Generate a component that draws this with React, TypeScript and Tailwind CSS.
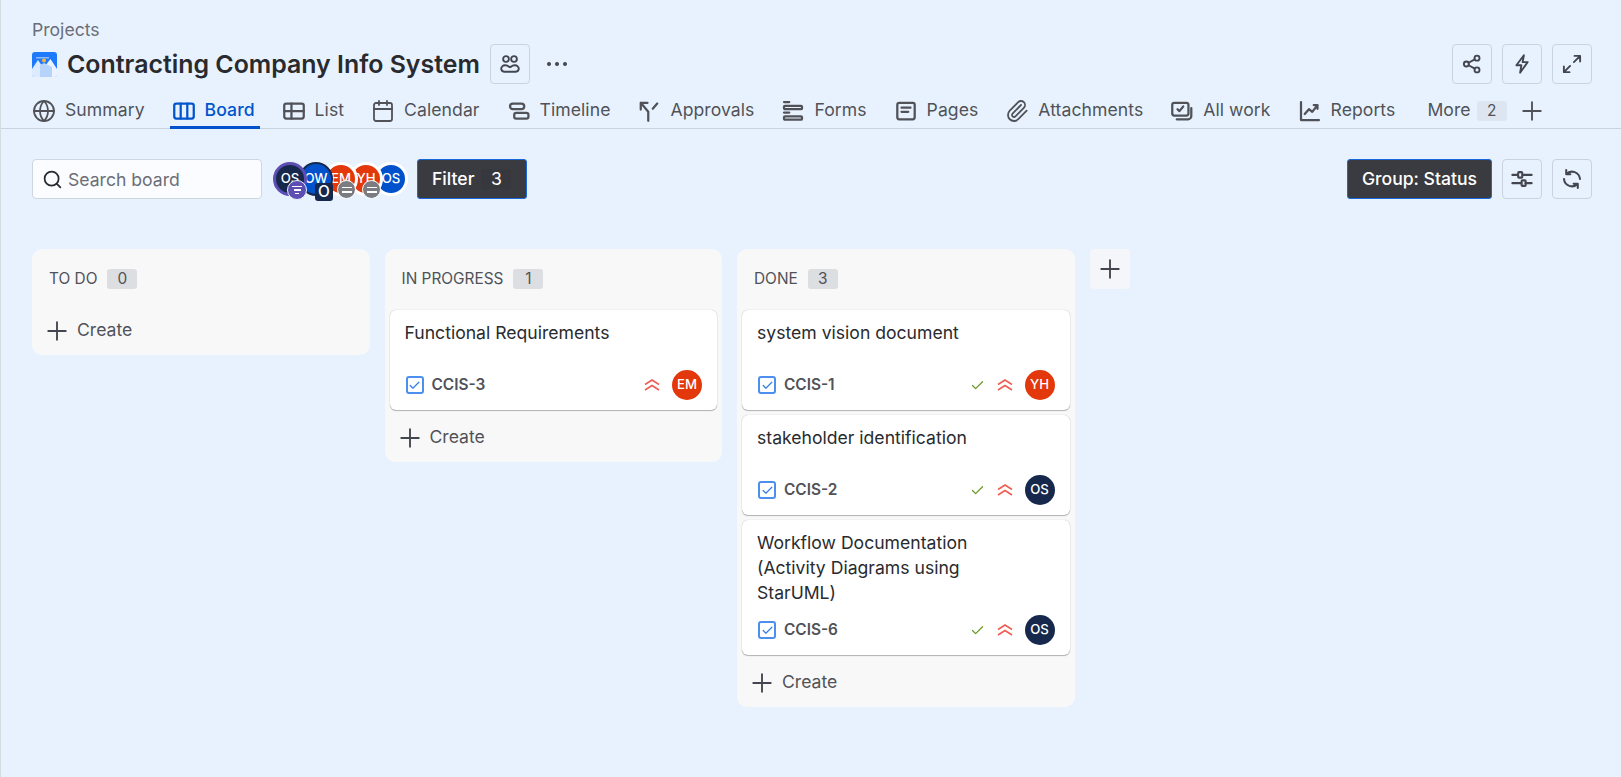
import { Globe, Calendar, Paperclip, Plus, Search, Check } from "lucide-react";
import type { ReactNode } from "react";

const font = { fontFamily: "Inter, sans-serif" };

const Ico = ({ children, size = 20 }: { children: ReactNode; size?: number }) => (
  <svg width={size} height={size} viewBox="0 0 16 16" fill="none" stroke="currentColor" strokeWidth="1.5" strokeLinecap="round" strokeLinejoin="round" className="shrink-0">
    {children}
  </svg>
);

const BoardIcon = () => (
  <Ico size={24}>
    <rect x="1.500" y="3" width="13" height="10" rx="1.300" />
    <path d="M5.800 3v10M10.200 3v10" />
  </Ico>
);
const ListIcon = () => (
  <Ico size={24}>
    <rect x="1.500" y="3" width="13" height="10" rx="1.300" />
    <path d="M1.500 8h13M6.300 3v10" />
  </Ico>
);
const TimelineIcon = () => (
  <Ico size={24}>
    <rect x="2" y="3" width="9.500" height="3.800" rx="1.900" />
    <rect x="4.800" y="9.200" width="9.500" height="3.800" rx="1.400" />
  </Ico>
);
const ApprovalsIcon = () => (
  <Ico size={24}>
    <path d="M2.500 2.500h4.500M2.500 2.500V7M2.500 2.500l5 6V14.500M10.500 6.500 13.500 3" />
  </Ico>
);
const FormsIcon = () => (
  <Ico size={24}>
    <path d="M2 2h3.500M2 9h3.500" />
    <rect x="2" y="4.500" width="12" height="2.300" rx="0.700" />
    <rect x="2" y="11.500" width="12" height="2.300" rx="0.700" />
  </Ico>
);
const PagesIcon = () => (
  <Ico size={24}>
    <rect x="2.200" y="2.500" width="11.600" height="11" rx="1.300" />
    <path d="M5 5.800h6M5 8.500h4.500" />
  </Ico>
);
const AllWorkIcon = () => (
  <Ico size={24}>
    <rect x="1.500" y="2.500" width="10.800" height="8.500" rx="1.300" />
    <path d="M5 6.800l1.300 1.300L8.800 5M4.500 13.500h7.500a2.200 2.200 0 0 0 2.200-2.200V6" />
  </Ico>
);
const ReportsIcon = () => (
  <Ico size={24}>
    <path d="M2 2v12h12M4.500 10l2.800-3.200 2.200 1.800 3.500-4.500M10.500 4h2.500v2.500" />
  </Ico>
);
const PeopleIcon = () => (
  <Ico>
    <circle cx="4.800" cy="4" r="2.300" />
    <circle cx="11.200" cy="4" r="2.300" />
    <path d="M3.500 14.200a2.500 2.500 0 0 1-1.500-4.500c1-1 3.500-1 5 .3 .5.500 1.500.500 2 0 1.500-1.300 4-1.300 5-.3a2.500 2.500 0 0 1-1.500 4.500z" />
  </Ico>
);
const ShareIcon = () => (
  <Ico>
    <circle cx="3.500" cy="8" r="2" />
    <circle cx="12" cy="3.300" r="2" />
    <circle cx="12" cy="12.700" r="2" />
    <path d="M5.300 7l4.900-2.700M5.300 9l4.900 2.700" />
  </Ico>
);
const BoltIcon = () => (
  <Ico>
    <path d="M9.500 1 3.500 9h4l-1 6 6-8.500h-4z" />
  </Ico>
);
const ExpandIcon = () => (
  <Ico>
    <path d="M9.500 6.500 14.500 1.500M10 1.500h4.500V6M6.500 9.500l-5 5M1.500 10v4.500H6" />
  </Ico>
);
const SlidersIcon = () => (
  <Ico size={22}>
    <path d="M1 5h4M8.500 5H15M1 11h6.500M10.500 11H15" />
    <rect x="5.200" y="3" width="3" height="4" rx="0.600" />
    <rect x="7.700" y="9" width="3" height="4" rx="0.600" />
  </Ico>
);
const RefreshIcon = () => (
  <Ico size={22}>
    <path d="M3.800 1.500v3h3M3.800 4.500A5.800 5.800 0 0 1 13.800 8M12.200 14.500v-3h-3M12.200 11.500A5.800 5.800 0 0 1 2.200 8" />
  </Ico>
);

const ProjectLogo = () => (
  <svg width="25" height="25" viewBox="0 0 25 25" className="shrink-0">
    <rect width="25" height="25" rx="3" fill="#1d7afc" />
    <rect x="4" y="5" width="13" height="1.500" fill="#8db9f7" />
    <path d="M0 17 6 8l6 9v8H2a2 2 0 0 1-2-2z" fill="#dcebff" />
    <path d="M13 25V14l5.500-7 6.500 10v6a2 2 0 0 1-2 2z" fill="#eaf3ff" />
    <path d="M8 25V13l4-2 8 4v10z" fill="#b6d4fb" />
    <circle cx="12" cy="8.500" r="2" fill="#f5b73b" />
  </svg>
);

const Chevrons = () => (
  <svg width="16" height="16" viewBox="0 0 16 16" fill="none" stroke="#f15b50" strokeWidth="1.500" className="shrink-0">
    <path d="M1 7.500 8 3l7 4.500M1 13 8 8.500l7 4.500" />
  </svg>
);

const TaskIcon = () => (
  <span className="ml-[1px] w-[18px] h-[18px] rounded-[3px] border-2 border-[#4c8fef] flex items-center justify-center shrink-0 bg-white">
    <Check size={13} strokeWidth={2.200} className="text-[#357de8]" />
  </span>
);

const tabs = [
  { label: "Summary", icon: <Globe size={24} strokeWidth={1.800} /> },
  { label: "Board", icon: <BoardIcon />, active: true },
  { label: "List", icon: <ListIcon /> },
  { label: "Calendar", icon: <Calendar size={24} strokeWidth={1.800} /> },
  { label: "Timeline", icon: <TimelineIcon /> },
  { label: "Approvals", icon: <ApprovalsIcon /> },
  { label: "Forms", icon: <FormsIcon /> },
  { label: "Pages", icon: <PagesIcon /> },
  { label: "Attachments", icon: <Paperclip size={24} strokeWidth={1.800} /> },
  { label: "All work", icon: <AllWorkIcon /> },
  { label: "Reports", icon: <ReportsIcon /> },
];

const IconBtn = ({ children }: { children: ReactNode }) => (
  <button className="w-10 h-10 rounded-[4px] border border-[#c9d3e0] flex items-center justify-center text-[#44464f]">{children}</button>
);

const Avatar = ({ text, bg }: { text: string; bg: string }) => (
  <span className={`w-[30px] h-[30px] rounded-full flex items-center justify-center text-white text-[13.2px] font-medium shrink-0 ${bg}`}>{text}</span>
);

const Card = ({ title, id, who, bg, done }: { title: ReactNode; id: string; who: string; bg: string; done?: boolean }) => (
  <div className="bg-white rounded-[6px] shadow-[0_1px_1px_rgba(30,31,33,0.3),0_0_1px_rgba(30,31,33,0.3)] py-[10px] px-[15px]">
    <div className="text-[17.6px] leading-[25px] text-[#292a2e] min-h-[40px] w-[250px]">{title}</div>
    <div className="flex items-center h-[30px] mt-[10px]">
      <TaskIcon />
      <span className="ml-[8px] text-[15.4px] font-semibold text-[#505258]">{id}</span>
      <span className="ml-auto flex items-center">
        {done && <Check size={15} strokeWidth={2} className="text-[#6a9a23] mr-[12px]" />}
        <Chevrons />
        <span className="ml-[12px]"><Avatar text={who} bg={bg} /></span>
      </span>
    </div>
  </div>
);

const CreateRow = ({ className }: { className: string }) => (
  <div className={`flex items-center text-[#505258] text-[17.6px] pl-[5px] h-[35px] ${className}`}>
    <Plus size={30} strokeWidth={1.500} className="text-[#44464f]" />
    <span className="ml-[5px]">Create</span>
  </div>
);

const ColHead = ({ name, n }: { name: string; n: number }) => (
  <div className="flex items-center h-[61px] pl-[12px] pb-[2px]">
    <span className="text-[15.4px] text-[#505258]">{name}</span>
    <span className="ml-[10px] w-[30px] h-5 rounded-[3px] bg-[#dddee1] text-[15.4px] text-[#505258] flex items-center justify-center">{n}</span>
  </div>
);

export default function App() {
  return (
    <div style={font} className="min-h-[777px] bg-[#e8f2ff] border-l border-[#d5dbe3] overflow-hidden">
      <div className="border-b border-[#c9d3e0] h-[129px] pl-[31px] pr-[29px] pt-[20px]">
        <div className="text-[17.6px] leading-5 text-[#6b6e76]">Projects</div>
        <div className="flex items-center h-10 mt-1">
          <ProjectLogo />
          <h1 className="ml-[10px] pt-[2px] text-[24.9px] font-semibold text-[#292a2e] whitespace-nowrap">Contracting Company Info System</h1>
          <span className="ml-[10px]"><IconBtn><PeopleIcon /></IconBtn></span>
          <div className="ml-[17px] flex gap-[4px]">
            <span className="w-[4px] h-[4px] rounded-full bg-[#44464f]" />
            <span className="w-[4px] h-[4px] rounded-full bg-[#44464f]" />
            <span className="w-[4px] h-[4px] rounded-full bg-[#44464f]" />
          </div>
          <div className="ml-auto flex gap-[10px]">
            <IconBtn><ShareIcon /></IconBtn>
            <IconBtn><BoltIcon /></IconBtn>
            <IconBtn><ExpandIcon /></IconBtn>
          </div>
        </div>
        <nav className="flex items-center gap-5 h-[41px] mt-[4px] -ml-[2px] text-[#505258] tracking-[0.06px]">
          {tabs.map((t) => (
            <div key={t.label} className={`relative h-full flex items-center gap-[9px] pl-[2px] pr-[5px] pt-[4px] text-[17.6px] ${t.active ? "text-[#0055cc] font-medium" : ""}`}>
              {t.icon}
              <span>{t.label}</span>
              {t.active && <span className="absolute left-0 right-0 bottom-0 h-[3px] bg-[#0052cc]" />}
            </div>
          ))}
          <div className="flex items-center h-full pt-[4px] text-[17.6px] ml-[7px]">
            <span>More</span>
            <span className="ml-[6px] w-[30px] h-5 bg-[#dde5f0] rounded-[3px] text-[15.4px] flex items-center justify-center">2</span>
            <Plus size={30} strokeWidth={1.500} className="ml-[10px]" />
          </div>
        </nav>
      </div>

      <div className="pl-[31px] pr-[29px] pt-[30px] flex items-center h-[70px]">
        <div className="w-[230px] h-10 bg-white/80 border border-[#d0d6df] rounded-[4px] flex items-center pl-[9px] text-[#6b6e76] text-[17.6px]">
          <Search size={21} strokeWidth={2} className="text-[#292a2e]" />
          <span className="ml-[5px] pt-[2px]">Search board</span>
        </div>
        <div className="ml-[11px] flex items-center">
          <span className="relative w-[34px] h-[34px] rounded-full bg-[#16294d] border-[3px] border-[#5e4db2] text-white text-[13.2px] font-medium flex items-center justify-center z-[5]">
            OS
            <span className="absolute right-[-3px] bottom-[-7px] w-[20px] h-[20px] rounded-full bg-[#5e4db2] border border-[#e8f2ff] flex flex-col gap-[2px] items-center justify-center">
              <span className="w-[10px] h-[1.5px] bg-white" /><span className="w-[7px] h-[1.5px] bg-white" /><span className="w-[4px] h-[1.5px] bg-white" />
            </span>
          </span>
          <span className="relative -ml-[8px] w-[34px] h-[34px] rounded-full bg-[#0052cc] border-2 border-[#16294d] text-white text-[13.2px] font-medium flex items-center justify-center z-[4]">
            OW
            <span className="absolute right-[-2px] bottom-[-7px] w-[18px] h-[18px] rounded-[3px] bg-[#16294d] text-white text-[15.4px] font-medium flex items-center justify-center">O</span>
          </span>
          {["EM", "YH"].map((t, i) => (
            <span key={t} className={`relative -ml-[9px] w-[34px] h-[34px] rounded-full bg-[#e2380b] border-[3px] border-white text-white text-[13.2px] font-medium flex items-center justify-center ${i === 0 ? "z-[3]" : "z-[2]"}`}>
              {t}
              <span className="absolute right-[-1px] bottom-[-6px] w-[19px] h-[19px] rounded-full bg-[#7a7c82] border border-white flex flex-col gap-[3px] items-center justify-center">
                <span className="w-[10px] h-[1.5px] bg-white" /><span className="w-[10px] h-[1.5px] bg-white" />
              </span>
            </span>
          ))}
          <span className="-ml-[9px] w-[34px] h-[34px] rounded-full bg-[#0052cc] border-[3px] border-white text-white text-[13.2px] font-medium flex items-center justify-center z-[1]">OS</span>
        </div>
        <div className="ml-[9px] w-[110px] h-10 rounded-[3px] bg-[#3a3b40] border border-[#1868db] text-white font-medium text-[17.6px] flex items-center pl-[14px]">
          Filter
          <span className="ml-[7px] w-[30px] h-5 rounded-[3px] bg-[#37383d] font-normal flex items-center justify-center">3</span>
        </div>
        <div className="ml-auto w-[145px] h-10 rounded-[3px] bg-[#3a3b40] border border-[#1868db] text-white font-medium text-[17.6px] flex items-center justify-center">Group: Status</div>
        <span className="ml-[10px]"><IconBtn><SlidersIcon /></IconBtn></span>
        <span className="ml-[10px]"><IconBtn><RefreshIcon /></IconBtn></span>
      </div>

      <div className="pl-[31px] pt-[50px] flex items-start gap-[15px]">
        <div className="w-[337.5px] bg-[#f8f8f8] rounded-[10px] px-[5px] pb-[7px]">
          <ColHead name="TO DO" n={0} />
          <CreateRow className="mt-[3px]" />
        </div>
        <div className="w-[337.5px] bg-[#f8f8f8] rounded-[10px] px-[5px] pb-[7px]">
          <ColHead name="IN PROGRESS" n={1} />
          <Card title="Functional Requirements" id="CCIS-3" who="EM" bg="bg-[#e2380b]" />
          <CreateRow className="mt-[10px]" />
        </div>
        <div className="w-[337.5px] bg-[#f8f8f8] rounded-[10px] px-[5px] pb-[7px]">
          <ColHead name="DONE" n={3} />
          <div className="flex flex-col gap-[5px]">
            <Card title="system vision document" id="CCIS-1" who="YH" bg="bg-[#e2380b]" done />
            <Card title="stakeholder identification" id="CCIS-2" who="OS" bg="bg-[#16294d]" done />
            <Card title="Workflow Documentation (Activity Diagrams using StarUML)" id="CCIS-6" who="OS" bg="bg-[#16294d]" done />
          </div>
          <CreateRow className="mt-[10px]" />
        </div>
        <div className="w-10 h-10 rounded-[4px] bg-[#f4f6f9] flex items-center justify-center text-[#44464f]">
          <Plus size={30} strokeWidth={1.500} />
        </div>
      </div>
    </div>
  );
}
